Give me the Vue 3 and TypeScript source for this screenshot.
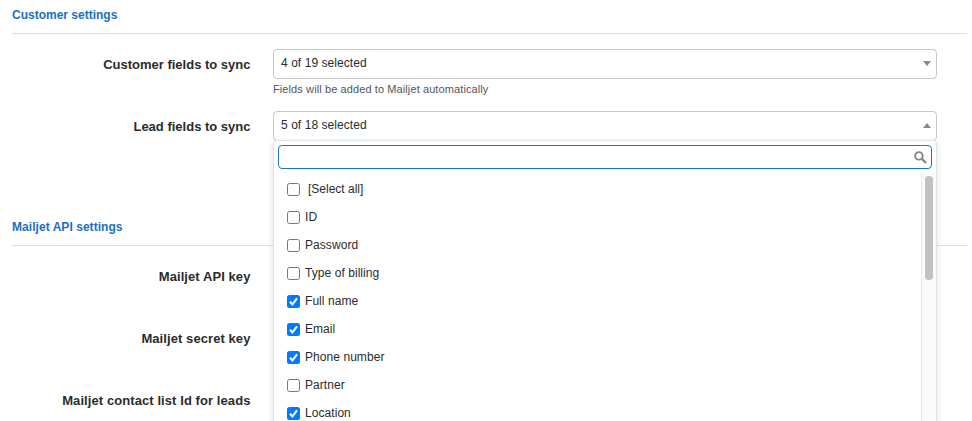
<script setup lang="ts">
import { ref } from 'vue'

interface Field {
  label: string
  checked: boolean
  all?: boolean
}

const query = ref('')

const fields = ref<Field[]>([
  { label: '[Select all]', checked: false, all: true },
  { label: 'ID', checked: false },
  { label: 'Password', checked: false },
  { label: 'Type of billing', checked: false },
  { label: 'Full name', checked: true },
  { label: 'Email', checked: true },
  { label: 'Phone number', checked: true },
  { label: 'Partner', checked: false },
  { label: 'Location', checked: true },
])

const apiLabels: string[] = ['Mailjet API key', 'Mailjet secret key', 'Mailjet contact list Id for leads']
</script>

<template>
  <main class="page">
    <section class="group">
      <h2 class="heading">Customer settings</h2>
      <div class="row">
        <span class="label">Customer fields to sync</span>
        <div class="control">
          <div class="select">
            <span>4 of 19 selected</span>
            <svg class="caret" width="8" height="5" viewBox="0 0 8 5"><path d="M0 0H8L4 5Z" fill="#888" /></svg>
          </div>
          <p class="hint">Fields will be added to Mailjet automatically</p>
        </div>
      </div>
      <div class="row">
        <span class="label">Lead fields to sync</span>
        <div class="control">
          <div class="select">
            <span>5 of 18 selected</span>
            <svg class="caret" width="8" height="5" viewBox="0 0 8 5"><path d="M0 5H8L4 0Z" fill="#888" /></svg>
          </div>
          <div class="menu">
            <div class="search">
              <input v-model="query" class="search-input" type="text" aria-label="Search" />
              <svg class="lens" width="13" height="13" viewBox="0 0 13 13" fill="none" stroke="#858585">
                <circle cx="4.9" cy="4.9" r="3.8" stroke-width="1.8" />
                <path d="M7.9 7.9L12 12" stroke-width="2.3" />
              </svg>
            </div>
            <div class="body">
              <ul class="list">
                <li v-for="field in fields" :key="field.label" class="item" @click="field.checked = !field.checked">
                  <span class="box" :class="{ on: field.checked }">
                    <svg v-if="field.checked" width="13" height="13" viewBox="0 0 13 13">
                      <path d="M3 6.8L5.4 9.4L10 3.3" fill="none" stroke="#fff" stroke-width="2" />
                    </svg>
                  </span>
                  <span class="name" :class="{ all: field.all }">{{ field.label }}</span>
                </li>
              </ul>
              <div class="track"><div class="thumb"></div></div>
            </div>
          </div>
        </div>
      </div>
    </section>
    <section class="group api">
      <h2 class="heading">Mailjet API settings</h2>
      <div v-for="label in apiLabels" :key="label" class="row">
        <span class="label">{{ label }}</span>
      </div>
    </section>
  </main>
</template>

<style>
body {
  margin: 0;
  background: #fff;
}
</style>

<style scoped>
.page {
  box-sizing: border-box;
  width: 972px;
  height: 421px;
  padding: 0 5px 0 12px;
  overflow: hidden;
  font-family: "Liberation Sans", Arial, sans-serif;
  font-size: 12px;
  color: #2b2b2b;
}
.heading {
  box-sizing: border-box;
  height: 34px;
  margin: 0 0 15px;
  padding-top: 7px;
  border-bottom: 1px solid #dedede;
  font-size: 12px;
  line-height: 16px;
  font-weight: bold;
  color: #1a70c6;
}
.group.api {
  margin-top: 39px;
}
.api .heading {
  letter-spacing: 0.05px;
}
.row {
  display: flex;
  height: 62px;
}
.label {
  width: 238.5px;
  margin-right: 22.5px;
  text-align: right;
  font-size: 13px;
  line-height: 31px;
  font-weight: bold;
}
.api .label {
  letter-spacing: 0.08px;
}
.control {
  position: relative;
  width: 664px;
}
.select {
  box-sizing: border-box;
  display: flex;
  align-items: center;
  justify-content: space-between;
  height: 30px;
  padding: 0 5px 2px 7px;
  border: 1px solid #c8c8c8;
  border-radius: 4px;
  letter-spacing: 0.06px;
}
.caret {
  margin-top: 1px;
}
.hint {
  margin: 2px 0 0;
  font-size: 11px;
  line-height: 16px;
  letter-spacing: 0.1px;
  color: #555;
}
.menu {
  position: absolute;
  top: 29px;
  left: 0;
  box-sizing: border-box;
  width: 664px;
  height: 300px;
  border: 1px solid #dce6e8;
  border-radius: 4px;
  background: #fff;
  box-shadow: 0 2px 6px rgba(0, 0, 0, 0.14);
}
.search {
  box-sizing: border-box;
  display: flex;
  align-items: center;
  height: 24px;
  margin: 4px 4px 0;
  padding: 0 4px 0 5px;
  border: 1px solid #1976c9;
  border-radius: 4px;
}
.search-input {
  flex: 1;
  min-width: 0;
  height: 18px;
  padding: 0;
  border: 0;
  outline: 0;
  background: transparent;
  font: inherit;
}
.lens {
  margin-top: 1px;
}
.body {
  display: flex;
  height: 266px;
  margin-top: 4px;
}
.list {
  flex: 1;
  margin: 0;
  padding: 2px 0 0 13px;
  list-style: none;
  overflow: hidden;
}
.item {
  display: flex;
  align-items: center;
  height: 28px;
}
.box {
  box-sizing: border-box;
  flex: none;
  width: 13px;
  height: 13px;
  margin-top: 1px;
  border: 1px solid #767676;
  border-radius: 2.5px;
}
.box.on {
  border: 0;
  background: #007aff;
}
.box svg {
  display: block;
}
.name {
  margin-left: 5px;
  letter-spacing: 0.06px;
}
.name.all {
  margin-left: 8px;
  letter-spacing: 0;
}
.track {
  box-sizing: border-box;
  width: 15px;
  padding: 3px 2px 0 3px;
  border-left: 1px solid #e6e6e6;
  background: #fafafa;
}
.thumb {
  width: 8px;
  height: 104px;
  border-radius: 4px;
  background: #c1c1c1;
}
</style>
